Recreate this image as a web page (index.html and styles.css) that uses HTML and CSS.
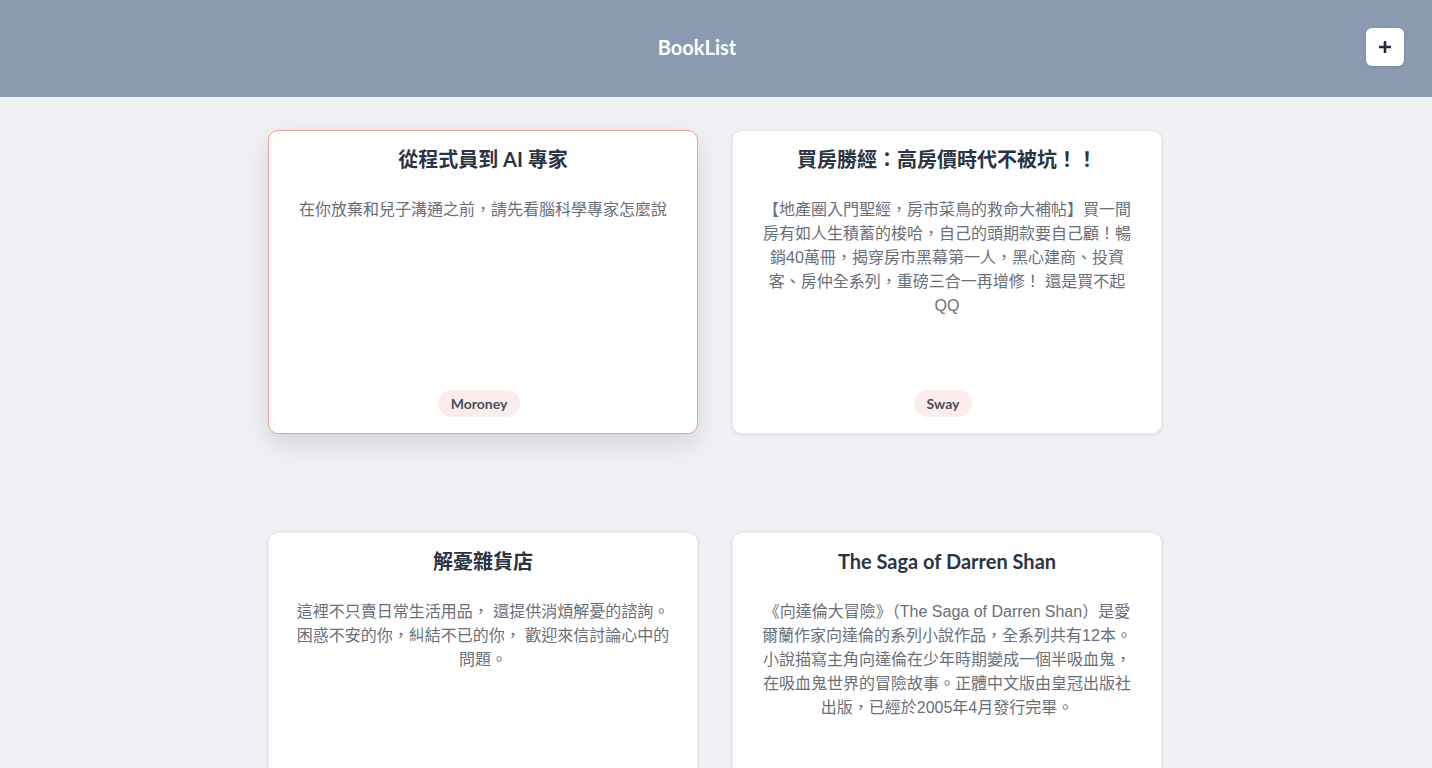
FILE: index.html
```html
<!DOCTYPE html>
<html lang="zh-Hant">
<head>
  <meta charset="UTF-8">
  <meta name="viewport" content="width=device-width, initial-scale=1">
  <title>BookList</title>
  <link rel="stylesheet" href="styles.css">
</head>
<body>

<header class="topbar">
  <h1>BookList</h1>
  <button class="add-btn" aria-label="新增">
    <svg width="12" height="12" viewBox="0 0 12 12"><path d="M6 1v10M1 6h10" stroke="#1f2a3a" stroke-width="2.6" stroke-linecap="round"/></svg>
  </button>
</header>

<main class="books">
  <div class="book active">
    <h3>從程式員到 AI 專家</h3>
    <p>在你放棄和兒子溝通之前，請先看腦科學專家怎麼說</p>
    <span class="tag">Moroney</span>
  </div>
  <div class="book">
    <h3>買房勝經：高房價時代不被坑！！</h3>
    <p>【地產圈入門聖經，房市菜鳥的救命大補帖】買一間房有如人生積蓄的梭哈，自己的頭期款要自己顧！暢銷40萬冊，揭穿房市黑幕第一人，黑心建商、投資客、房仲全系列，重磅三合一再增修！ 還是買不起QQ</p>
    <span class="tag">Sway</span>
  </div>
  <div class="book">
    <h3>解憂雜貨店</h3>
    <p>這裡不只賣日常生活用品， 還提供消煩解憂的諮詢。困惑不安的你，糾結不已的你， 歡迎來信討論心中的問題。</p>
    <span class="tag">東野圭吾</span>
  </div>
  <div class="book">
    <h3>The Saga of Darren Shan</h3>
    <p>《向達倫大冒險》（The Saga of Darren Shan）是愛爾蘭作家向達倫的系列小說作品，全系列共有12本。小說描寫主角向達倫在少年時期變成一個半吸血鬼，在吸血鬼世界的冒險故事。正體中文版由皇冠出版社出版，已經於2005年4月發行完畢。</p>
    <span class="tag">Darren Shan</span>
  </div>
</main>

</body>
</html>
```

FILE: styles.css
```css
body {
  font-family: Lato, "Noto Sans CJK TC", sans-serif;
  background: #f0f1f5;
  color: #2d3748;
  margin: 0;
  padding: 0;
}
.topbar {
  background: #8a9bb1;
  height: 97px;
  display: flex;
  align-items: center;
  padding: 0 28px 3px;
  box-sizing: border-box;
}
.topbar h1 {
  flex: 1;
  margin: 0;
  text-align: center;
  color: #fff;
  font-size: 20px;
  font-weight: 700;
}
.add-btn {
  width: 38px;
  height: 38px;
  background: #fff;
  border: none;
  border-radius: 6px;
  display: flex;
  align-items: center;
  justify-content: center;
  box-shadow: 0 1px 3px rgba(0,0,0,0.15);
  cursor: pointer;
  padding: 0;
}
.books {
  display: grid;
  grid-template-columns: 430px 430px;
  column-gap: 34px;
  row-gap: 98px;
  justify-content: center;
  padding: 33px 2px 40px 0;
}
.book {
  height: 304px;
  box-sizing: border-box;
  background: #fff;
  border: 1px solid #e8e9ee;
  border-radius: 10px;
  padding: 14px 26px 16px;
  display: flex;
  flex-direction: column;
  align-items: center;
  text-align: center;
  box-shadow: 0 1px 4px rgba(0,0,0,0.1);
}
.book.active {
  border-color: #f29c9c;
  box-shadow: 0 10px 24px rgba(0,0,0,0.12);
}
.book h3 {
  margin: 0;
  font-size: 20px;
  line-height: 28px;
  font-weight: 700;
  color: #2a3444;
}
.book p {
  margin: 25px 0 0;
  font-family: "Liberation Sans", "Noto Sans CJK TC", sans-serif;
  font-size: 16px;
  line-height: 24px;
  color: #6a6f7a;
}
.tag {
  margin-top: auto;
  margin-right: 8px;
  background: #fdecec;
  color: #4a505e;
  font-size: 14px;
  font-weight: 700;
  line-height: 27px;
  height: 27px;
  padding: 0 13px;
  border-radius: 14px;
}
```
